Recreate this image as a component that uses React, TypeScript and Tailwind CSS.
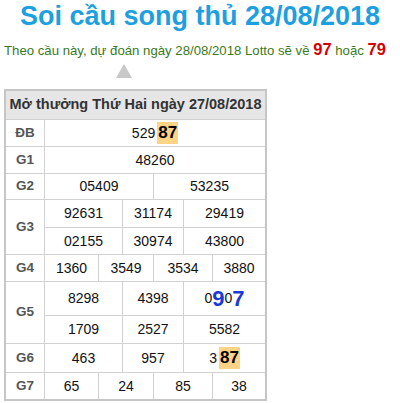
import React from "react";

const font = { fontFamily: '"Liberation Sans", Arial, sans-serif' };

function Label({ children, tall }: { children: React.ReactNode; tall?: boolean }) {
  return (
    <div
      className={`bg-white flex items-center justify-center text-[13.5px] font-bold text-[#555] ${
        tall ? "row-span-2" : ""
      }`}
    >
      {children}
    </div>
  );
}

function Cell({ children, span }: { children: React.ReactNode; span: 1 | 2 | 3 | 6 }) {
  const spans = {
    1: "col-span-1",
    2: "col-span-2",
    3: "col-span-3",
    6: "col-span-6",
  };
  return (
    <div
      className={`bg-white flex items-center justify-center text-[14px] text-[#111] ${spans[span]}`}
    >
      {children}
    </div>
  );
}

function Hit({ children }: { children: React.ReactNode }) {
  return (
    <span className="bg-[#ffd386] font-bold text-[17px] leading-[22px] px-[1px] ml-[2px] text-black">
      {children}
    </span>
  );
}

export default function App() {
  return (
    <div className="w-[400px] h-[403px] bg-white pl-[4px]" style={font}>
      <h1 className="text-center text-[27px] leading-[32px] font-bold text-[#1e9fe0] -ml-[4px]">
        Soi cầu song thủ 28/08/2018
      </h1>

      <p className="mt-[7px] text-[13.2px] leading-[20px] text-[#3a7a1a] whitespace-nowrap">
        Theo cầu này, dự đoán ngày 28/08/2018 Lotto sẽ về{" "}
        <span className="text-[16.5px] font-bold text-[#d40000]">97</span> hoặc{" "}
        <span className="text-[16.5px] font-bold text-[#d40000]">79</span>
      </p>

      <div className="mt-[3px] ml-[112px] w-0 h-0 border-l-[8px] border-r-[8px] border-b-[14px] border-l-transparent border-r-transparent border-b-[#c8c8c8]" />

      <div className="mt-[11px] w-[263px] border-2 border-[#c6c6c6]">
        <div className="grid gap-px bg-[#d2d2d2] grid-cols-[38px_53px_23px_30px_29px_28px_52px] grid-rows-[28px_26px_26px_25px_27px_26px_26px_33px_27px_28px_26px]">
          <div className="col-span-7 bg-[#e6e6e6] flex items-center justify-center text-[14.5px] font-bold text-[#333]">
            Mở thưởng Thứ Hai ngày 27/08/2018
          </div>

          <Label>ĐB</Label>
          <Cell span={6}>
            529<Hit>87</Hit>
          </Cell>

          <Label>G1</Label>
          <Cell span={6}>48260</Cell>

          <Label>G2</Label>
          <Cell span={3}>05409</Cell>
          <Cell span={3}>53235</Cell>

          <Label tall>G3</Label>
          <Cell span={2}>92631</Cell>
          <Cell span={2}>31174</Cell>
          <Cell span={2}>29419</Cell>
          <Cell span={2}>02155</Cell>
          <Cell span={2}>30974</Cell>
          <Cell span={2}>43800</Cell>

          <Label>G4</Label>
          <Cell span={1}>1360</Cell>
          <Cell span={2}>3549</Cell>
          <Cell span={2}>3534</Cell>
          <Cell span={1}>3880</Cell>

          <Label tall>G5</Label>
          <Cell span={2}>8298</Cell>
          <Cell span={2}>4398</Cell>
          <Cell span={2}>
            <span>0</span>
            <span className="text-[22px] font-bold text-[#1a3ad8]">9</span>
            <span>0</span>
            <span className="text-[22px] font-bold text-[#1a3ad8]">7</span>
          </Cell>
          <Cell span={2}>1709</Cell>
          <Cell span={2}>2527</Cell>
          <Cell span={2}>5582</Cell>

          <Label>G6</Label>
          <Cell span={2}>463</Cell>
          <Cell span={2}>957</Cell>
          <Cell span={2}>
            3<Hit>87</Hit>
          </Cell>

          <Label>G7</Label>
          <Cell span={1}>65</Cell>
          <Cell span={2}>24</Cell>
          <Cell span={2}>85</Cell>
          <Cell span={1}>38</Cell>
        </div>
      </div>
    </div>
  );
}
